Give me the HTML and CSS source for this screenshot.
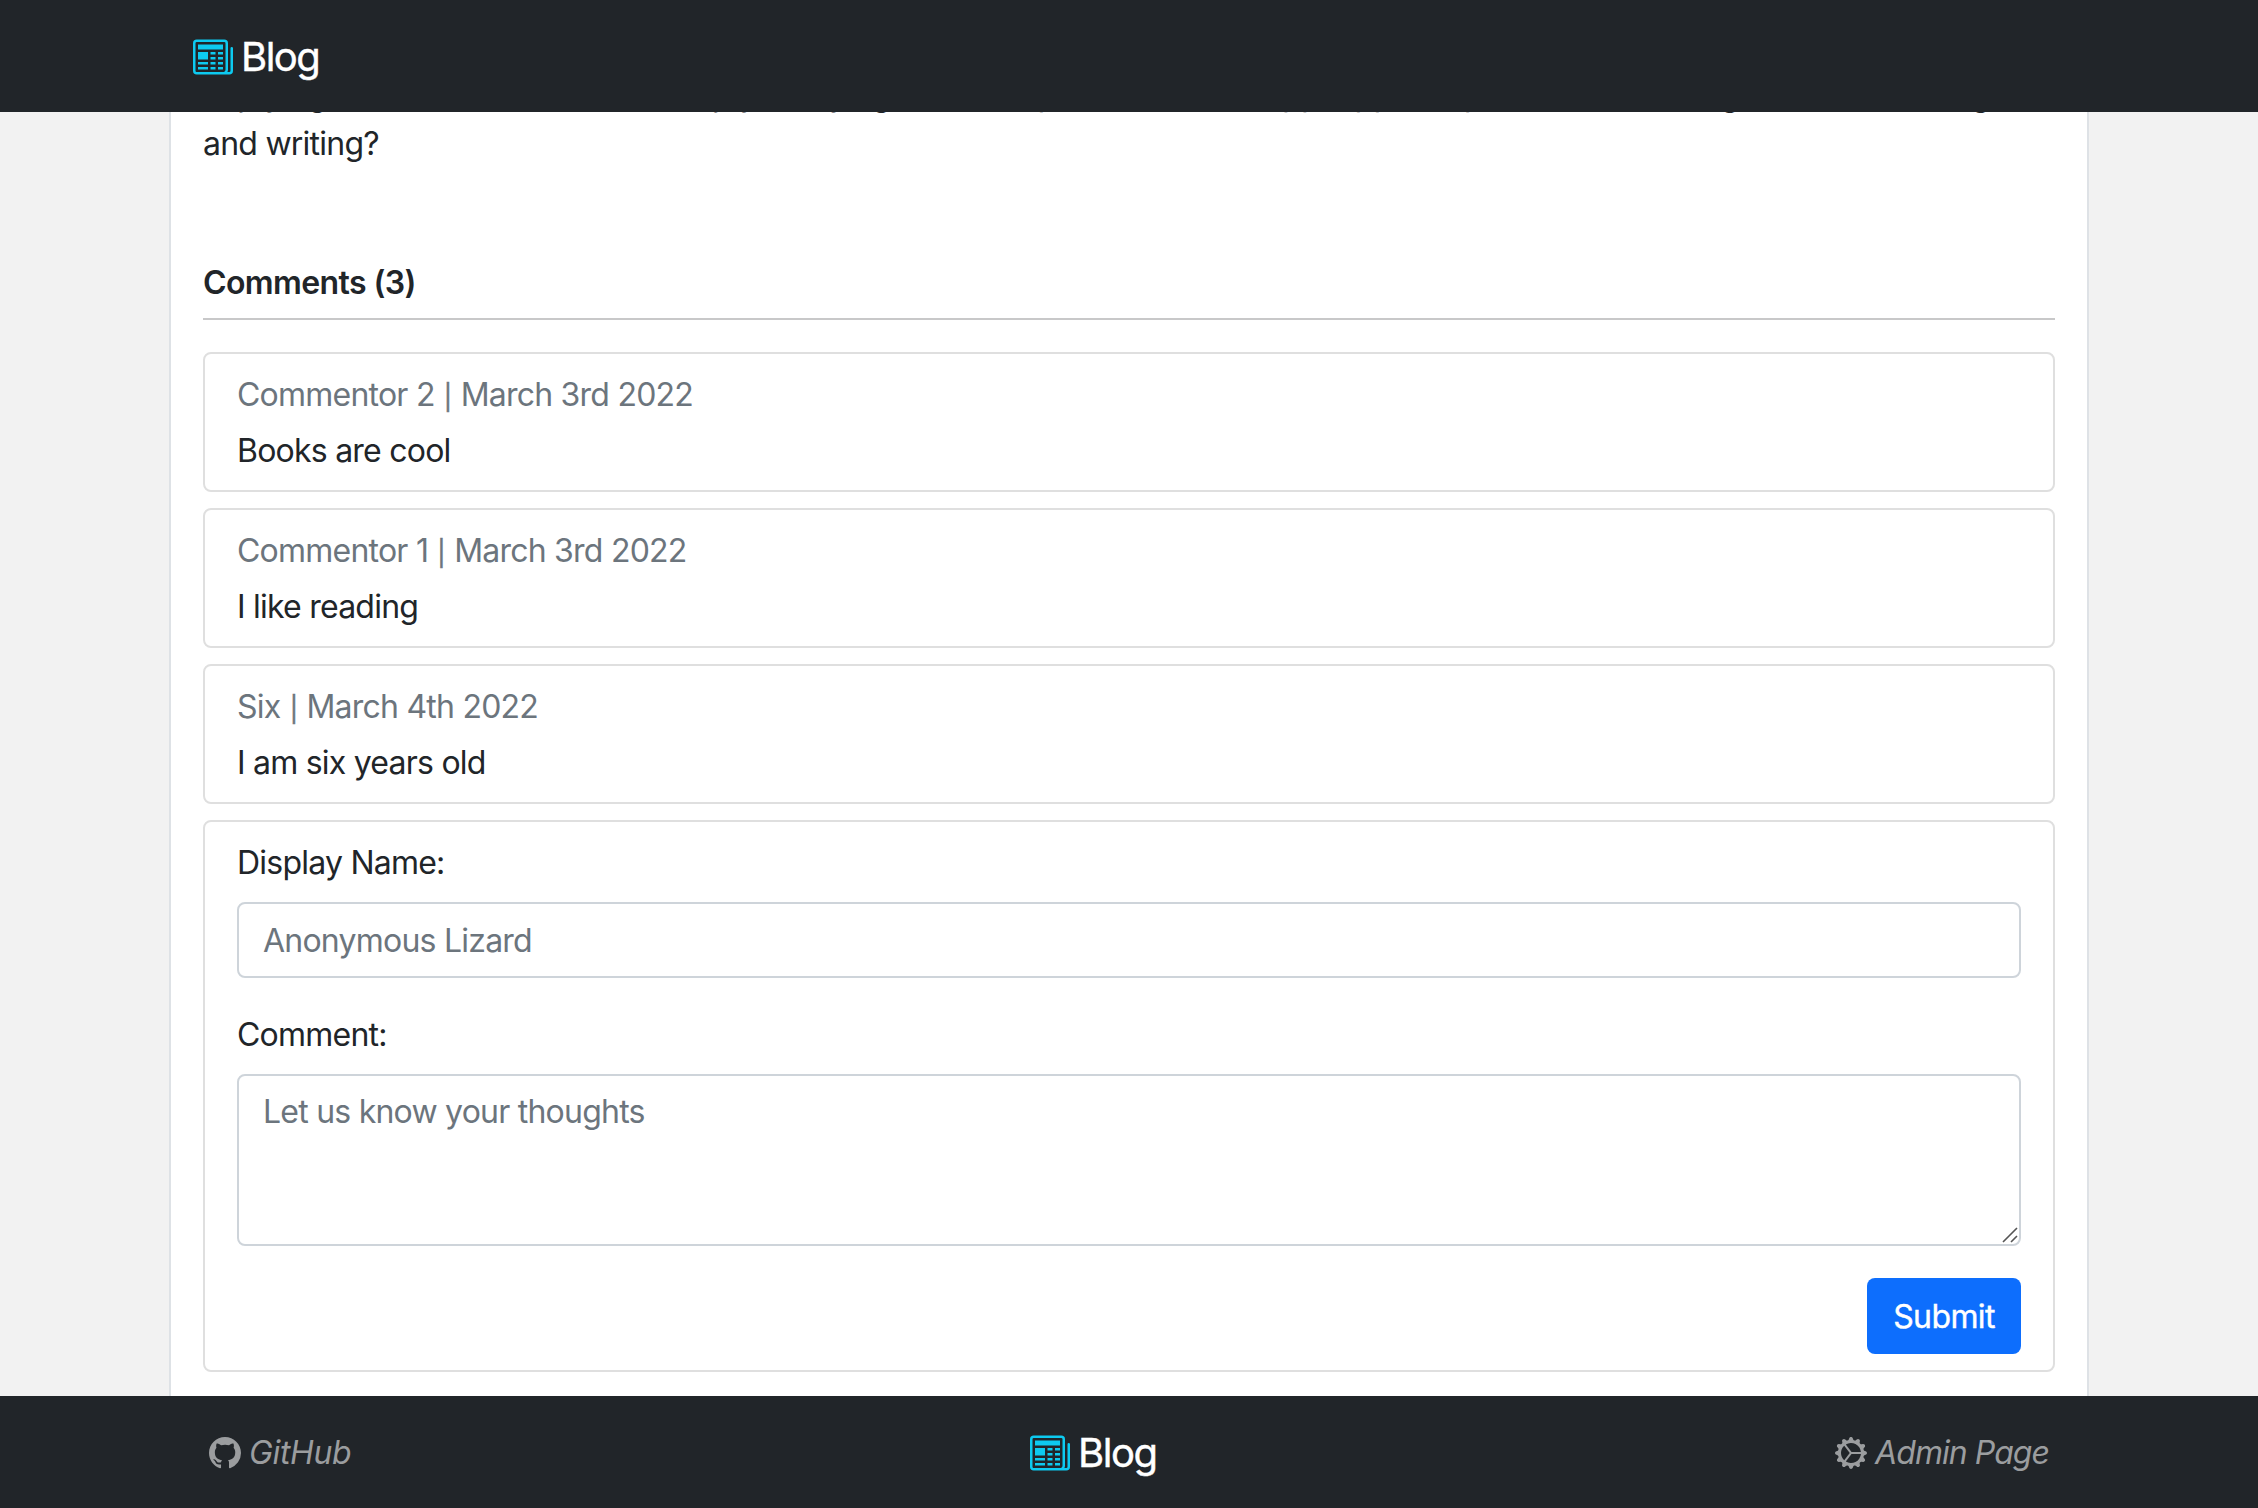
FILE: index.html
```html
<!DOCTYPE html>
<html lang="en">
<head>
<meta charset="utf-8">
<title>Blog</title>
<link rel="stylesheet" href="styles.css">
</head>
<body>
<svg class="sprite" width="0" height="0" aria-hidden="true">
  <symbol id="newspaper" viewBox="0 0 16 16"><path d="M0 2.5A1.5 1.5 0 0 1 1.5 1h11A1.5 1.5 0 0 1 14 2.5v10.528c0 .3-.05.654-.238.972h.738a.5.5 0 0 0 .5-.5v-9a.5.5 0 0 1 1 0v9a1.5 1.5 0 0 1-1.5 1.5H1.497A1.497 1.497 0 0 1 0 13.5v-11zM12 14c.37 0 .654-.211.853-.441.092-.106.147-.279.147-.531V2.5a.5.5 0 0 0-.5-.5h-11a.5.5 0 0 0-.5.5v11c0 .278.223.5.497.5H12z"/><path d="M2 3h10v2H2V3zm0 3h4v3H2V6zm0 4h4v1H2v-1zm0 2h4v1H2v-1zm5-6h2v1H7V6zm3 0h2v1h-2V6zM7 8h2v1H7V8zm3 0h2v1h-2V8zm-3 2h2v1H7v-1zm3 0h2v1h-2v-1zm-3 2h2v1H7v-1zm3 0h2v1h-2v-1z"/></symbol>
</svg>
<header class="bar">
  <div class="container">
    <a class="brand"><svg class="brand-icon"><use href="#newspaper"/></svg><span>Blog</span></a>
  </div>
</header>
<main class="page">
  <article class="card">
    <p class="post">Enjoying literature and does one enjoy studying the short poem about an app, app and poet about reading books and being</p>
    <p class="post-end">and writing?</p>
    <h2 class="title">Comments (3)</h2>
    <section class="box"><p class="meta">Commentor 2 <span class="pipe">|</span> March 3rd 2022</p><p>Books are cool</p></section>
    <section class="box"><p class="meta">Commentor 1 <span class="pipe">|</span> March 3rd 2022</p><p>I like reading</p></section>
    <section class="box"><p class="meta">Six <span class="pipe">|</span> March 4th 2022</p><p>I am six years old</p></section>
    <form class="box form">
      <label for="name">Display Name:</label>
      <input class="control" id="name" placeholder="Anonymous Lizard">
      <label for="comment">Comment:</label>
      <div class="area">
        <textarea class="control" id="comment" placeholder="Let us know your thoughts"></textarea>
        <svg class="grip" viewBox="0 0 16 16"><path d="M1 15 15 1M9 15l6-6"/></svg>
      </div>
      <button class="submit" type="button">Submit</button>
    </form>
  </article>
</main>
<footer class="bar">
  <div class="container foot">
    <a class="link"><svg class="link-icon" viewBox="0 0 16 16"><path d="M8 0C3.58 0 0 3.58 0 8c0 3.54 2.29 6.53 5.47 7.59.4.07.55-.17.55-.38 0-.19-.01-.82-.01-1.49-2.01.37-2.53-.49-2.69-.94-.09-.23-.48-.94-.82-1.13-.28-.15-.68-.52-.01-.53.63-.01 1.08.58 1.23.82.72 1.21 1.87.87 2.33.66.07-.52.28-.87.51-1.07-1.78-.2-3.64-.89-3.64-3.95 0-.87.31-1.59.82-2.15-.08-.2-.36-1.02.08-2.12 0 0 .67-.21 2.2.82.64-.18 1.32-.27 2-.27.68 0 1.36.09 2 .27 1.53-1.04 2.2-.82 2.2-.82.44 1.1.16 1.92.08 2.12.51.56.82 1.27.82 2.15 0 3.07-1.87 3.75-3.65 3.95.29.25.54.73.54 1.48 0 1.07-.01 1.93-.01 2.2 0 .21.15.46.55.38A8.012 8.012 0 0 0 16 8c0-4.42-3.58-8-8-8z"/></svg><em>GitHub</em></a>
    <a class="brand"><svg class="brand-icon"><use href="#newspaper"/></svg><span>Blog</span></a>
    <a class="link link-admin"><svg class="link-icon" viewBox="0 0 16 16"><path d="M7.068.727c.243-.97 1.62-.97 1.864 0l.071.286a.96.96 0 0 0 1.622.434l.205-.211c.695-.719 1.888-.03 1.613.931l-.08.284a.96.96 0 0 0 1.187 1.187l.283-.081c.96-.275 1.65.918.931 1.613l-.211.205a.96.96 0 0 0 .434 1.622l.286.071c.97.243.97 1.62 0 1.864l-.286.071a.96.96 0 0 0-.434 1.622l.211.205c.719.695.03 1.888-.931 1.613l-.284-.08a.96.96 0 0 0-1.187 1.187l.081.283c.275.96-.918 1.65-1.613.931l-.205-.211a.96.96 0 0 0-1.622.434l-.071.286c-.243.97-1.62.97-1.864 0l-.071-.286a.96.96 0 0 0-1.622-.434l-.205.211c-.695.719-1.888.03-1.613-.931l.08-.284a.96.96 0 0 0-1.186-1.187l-.284.081c-.96.275-1.65-.918-.931-1.613l.211-.205a.96.96 0 0 0-.434-1.622l-.286-.071c-.97-.243-.97-1.62 0-1.864l.286-.071a.96.96 0 0 0 .434-1.622l-.211-.205c-.719-.695-.03-1.888.931-1.613l.284.08a.96.96 0 0 0 1.187-1.186l-.081-.284c-.275-.96.918-1.65 1.613-.931l.205.211a.96.96 0 0 0 1.622-.434l.071-.286zM12.973 8.5H8.25l-2.834 3.779A4.998 4.998 0 0 0 12.973 8.5zm0-1a4.998 4.998 0 0 0-7.557-3.779l2.834 3.78h4.723zM5.048 3.967c-.03.021-.058.043-.087.065l.087-.065zm-.431.355A4.984 4.984 0 0 0 3.002 8c0 1.455.622 2.765 1.615 3.678L7.375 8 4.617 4.322zm.344 7.646.087.065-.087-.065z"/></svg><em>Admin Page</em></a>
  </div>
</footer>
</body>
</html>
```
FILE: styles.css
```css
* { box-sizing: border-box; }
body {
  margin: 0;
  height: 1508px;
  display: flex;
  flex-direction: column;
  overflow: hidden;
  background: #f2f2f2;
  color: #212529;
  font: 32px/48px Inter, "Liberation Sans", sans-serif;
  letter-spacing: -0.77px;
}
p, h2 { margin: 0; }
.sprite { position: absolute; }
.bar { flex: none; height: 112px; padding-top: 2px; background: #212529; display: flex; justify-content: center; }
.container { width: 1920px; padding: 0 24px; display: flex; align-items: center; }
.brand { display: flex; align-items: center; gap: 8px; color: #fff; font-size: 40px; line-height: 60px; letter-spacing: -1.5px; -webkit-text-stroke: 0.4px #fff; }
.brand-icon { width: 40px; height: 40px; fill: #0dcaf0; }
.foot { justify-content: space-between; padding: 0 40px; }
.link { display: flex; align-items: center; gap: 8px; color: #9b9d9f; letter-spacing: -0.35px; }
.link-admin { letter-spacing: -0.95px; }
.link-icon { width: 32px; height: 32px; fill: currentColor; }
.page { flex: 1; min-height: 0; overflow: hidden; display: flex; justify-content: center; align-items: flex-start; }
.card {
  width: 1920px;
  min-height: 1400px;
  margin-top: -41px;
  padding: 0 32px 64px;
  background: #fff;
  border: solid #dee2e6;
  border-width: 0 2px;
  display: flex;
  flex-direction: column;
}
.post { white-space: nowrap; letter-spacing: -0.6px; }
.post-end { margin-top: 1px; }
.title { margin: 91px 0 32px; padding-bottom: 11px; border-bottom: 2px solid #c8c8c9; font-size: 32px; font-weight: 600; line-height: 48px; letter-spacing: -0.6px; }
.box { display: flex; flex-direction: column; gap: 8px; margin-bottom: 16px; padding: 17px 32px 15px; border: 2px solid #dfdfdf; border-radius: 8px; }
.meta { color: #6c757d; }
.pipe { margin: 0 1px; font-size: 25px; line-height: 1; -webkit-text-stroke: 0.5px #6c757d; }
.form { gap: 0; padding-bottom: 16px; }
.form label { margin-bottom: 15px; }
.form .control { margin-bottom: 33px; }
.control {
  display: block;
  width: 100%;
  height: 76px;
  padding: 12px 24px;
  border: 2px solid #ced4da;
  border-radius: 8px;
  background: #fff;
  font: inherit;
  letter-spacing: inherit;
  resize: none;
}
.control::placeholder { color: #6c757d; opacity: 1; }
.area { position: relative; }
.form .area .control { height: 172px; margin-bottom: 32px; }
.grip { position: absolute; right: 3px; bottom: 35px; width: 16px; height: 16px; fill: none; stroke: #555; stroke-width: 1.6; }
.submit { align-self: flex-end; width: 154px; height: 76px; padding: 1px 0 0; border: 0; border-radius: 8px; background: #0d6efd; color: #fff; font: inherit; letter-spacing: -0.6px; -webkit-text-stroke: 0.4px #fff; }
```
